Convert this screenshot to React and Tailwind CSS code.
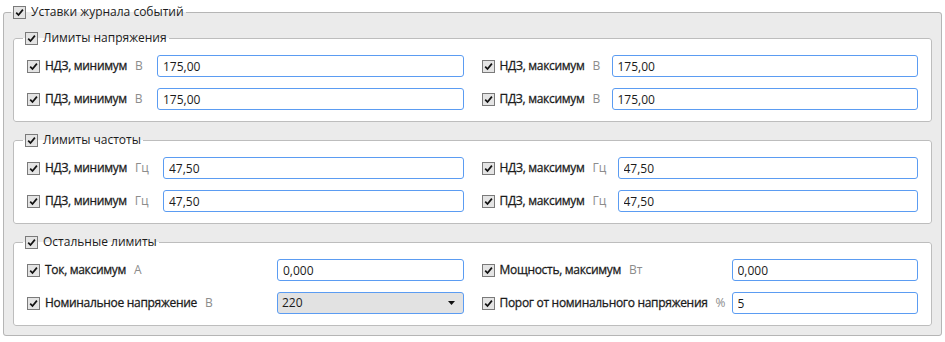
import React from "react";

const Check = () => (
  <span className="inline-flex h-[13px] w-[13px] shrink-0 items-center justify-center border border-[#7a7a7a] bg-[#e4e4e4]">
    <svg width="9" height="9" viewBox="0 0 9 9">
      <path d="M1.2 4.6 L3.5 7 L7.9 1.6" stroke="#111" strokeWidth="1.7" fill="none" />
    </svg>
  </span>
);

const Field = ({ item, labelW }) => (
  <div className="flex h-[22px] items-center">
    <div className="flex shrink-0 items-center whitespace-nowrap" style={{ width: labelW }}>
      <Check />
      <span className="ml-[5px] tracking-[-0.3px] text-[#1b1b1b] [-webkit-text-stroke:0.28px_#1b1b1b]">
        {item.label}
      </span>
      <span className="ml-[8px] text-[#8c8c8c]">{item.unit}</span>
    </div>
    {item.select ? (
      <div className="flex h-[22px] flex-1 items-center justify-between rounded-[3px] border border-[#5b9cf2] bg-[#e2e2e2] pl-[4px] pr-[8px] text-[#1b1b1b]">
        <span>{item.value}</span>
        <svg width="7" height="4" viewBox="0 0 7 4">
          <path d="M0 0 H7 L3.5 4 Z" fill="#111" />
        </svg>
      </div>
    ) : (
      <input
        readOnly
        value={item.value}
        className="h-[22px] min-w-0 flex-1 rounded-[3px] border border-[#5b9cf2] bg-white px-[5px] text-[#1b1b1b] outline-none"
      />
    )}
  </div>
);

const Group = ({ title, labelW, items }) => (
  <fieldset className="rounded-[3px] border border-[#bdbdbd] bg-white">
    <legend className="ml-[9px] flex items-center gap-[5px] px-[2px] leading-[16px]">
      <Check />
      <span className="text-[#1b1b1b]">{title}</span>
    </legend>
    <div className="grid grid-cols-2 gap-x-[18px] gap-y-[11px] px-[13px] pb-[11px] pt-[9px]">
      {items.map((it, i) => (
        <Field key={i} item={it} labelW={labelW} />
      ))}
    </div>
  </fieldset>
);

export default function App() {
  const v = (label, unit, value, select) => ({ label, unit, value, select });
  return (
    <div
      className="h-[342px] w-[945px] bg-white pt-[4px] text-[12px] leading-[16px]"
      style={{ fontFamily: '"Open Sans", "Noto Sans", sans-serif' }}
    >
      <fieldset className="mx-[3px] rounded-[3px] border border-[#b5b5b5] bg-[#ebebeb]">
        <legend className="ml-[7px] flex items-center gap-[5px] px-[2px] leading-[16px]">
          <Check />
          <span className="text-[#1b1b1b]">Уставки журнала событий</span>
        </legend>
        <div className="flex flex-col gap-[10px] px-[9px] pb-[9px] pt-[10px]">
          <Group
            title="Лимиты напряжения"
            labelW={130}
            items={[
              v("НДЗ, минимум", "В", "175,00"),
              v("НДЗ, максимум", "В", "175,00"),
              v("ПДЗ, минимум", "В", "175,00"),
              v("ПДЗ, максимум", "В", "175,00"),
            ]}
          />
          <Group
            title="Лимиты частоты"
            labelW={136}
            items={[
              v("НДЗ, минимум", "Гц", "47,50"),
              v("НДЗ, максимум", "Гц", "47,50"),
              v("ПДЗ, минимум", "Гц", "47,50"),
              v("ПДЗ, максимум", "Гц", "47,50"),
            ]}
          />
          <Group
            title="Остальные лимиты"
            labelW={250}
            items={[
              v("Ток, максимум", "А", "0,000"),
              v("Мощность, максимум", "Вт", "0,000"),
              v("Номинальное напряжение", "В", "220", true),
              v("Порог от номинального напряжения", "%", "5"),
            ]}
          />
        </div>
      </fieldset>
    </div>
  );
}
